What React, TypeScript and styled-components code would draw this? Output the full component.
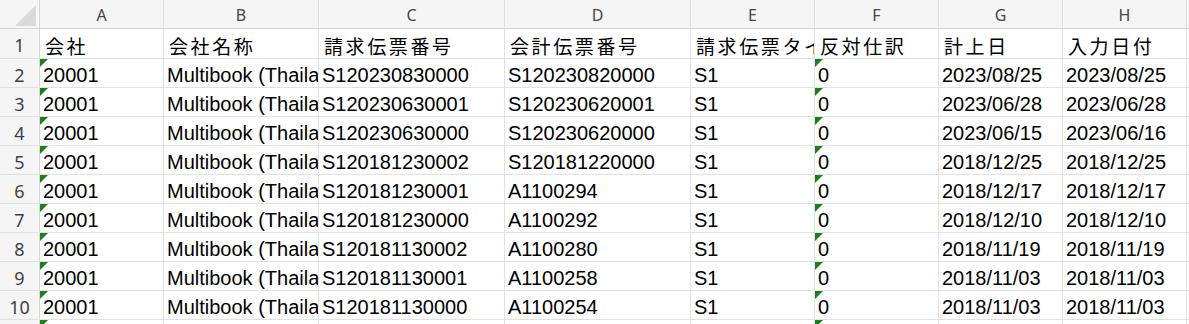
import React from 'react'
import styled, { createGlobalStyle } from 'styled-components'

const GlobalStyle = createGlobalStyle`
  html, body {
    margin: 0;
    padding: 0;
    background: #ffffff;
    overflow: hidden;
  }
`

const Sheet = styled.div`
  display: grid;
  grid-template-columns: 40px 124px 155px 186px 186px 124px 124px 124px 124px 1fr;
  grid-template-rows: 29px 30px repeat(10, 29px);
  width: 1189px;
  height: 324px;
  overflow: hidden;
  background: #ffffff;
`

const Corner = styled.div`
  position: relative;
  background: #f5f5f5;
  border-right: 1px solid #d6d6d6;
  border-bottom: 1px solid #d6d6d6;
  box-sizing: border-box;

  &::after {
    content: '';
    position: absolute;
    left: 15px;
    top: 5px;
    width: 21px;
    height: 21px;
    background: #dadada;
    clip-path: polygon(100% 0, 100% 100%, 0 100%);
  }
`

const ColHead = styled.div`
  display: flex;
  align-items: center;
  justify-content: center;
  background: #f5f5f5;
  border-right: 1px solid #e0e0e0;
  border-bottom: 1px solid #d6d6d6;
  box-sizing: border-box;
  font-family: 'Noto Sans', 'Open Sans', sans-serif;
  font-size: 16px;
  color: #454545;
  padding-top: 1px;
`

const RowHead = styled.div`
  display: flex;
  align-items: center;
  justify-content: center;
  background: #f5f5f5;
  border-right: 1px solid #d6d6d6;
  border-bottom: 1px solid #e0e0e0;
  box-sizing: border-box;
  font-family: 'Noto Sans', 'Open Sans', sans-serif;
  font-size: 18px;
  color: #3f3f46;
  padding-top: 3px;
`

const Cell = styled.div<{ $flag?: boolean; $cjk?: boolean }>`
  position: relative;
  display: flex;
  align-items: flex-end;
  box-sizing: border-box;
  border-right: 1px solid #e1e1e1;
  border-bottom: 1px solid #e1e1e1;
  padding: 0 0 2px ${p => (p.$cjk ? '5px' : '3px')};
  overflow: hidden;
  white-space: nowrap;
  font-family: ${p =>
    p.$cjk
      ? "'Noto Sans CJK JP', 'Noto Sans', sans-serif"
      : "'Liberation Sans', Arial, sans-serif"};
  font-size: ${p => (p.$cjk ? '19px' : '20px')};
  letter-spacing: ${p => (p.$cjk ? '2.6px' : '0')};
  line-height: 20px;
  color: #000000;

  &::before {
    content: '';
    display: ${p => (p.$flag ? 'block' : 'none')};
    position: absolute;
    left: 0;
    top: 0;
    width: 8px;
    height: 8px;
    background: #1b7f1b;
    clip-path: polygon(0 0, 100% 0, 0 100%);
  }
`

const letters = ['A', 'B', 'C', 'D', 'E', 'F', 'G', 'H', '']

const titles = ['会社', '会社名称', '請求伝票番号', '会計伝票番号', '請求伝票タイプ', '反対仕訳', '計上日', '入力日付', '']

const rows = [
  ['S120230830000', 'S120230820000', '2023/08/25', '2023/08/25'],
  ['S120230630001', 'S120230620001', '2023/06/28', '2023/06/28'],
  ['S120230630000', 'S120230620000', '2023/06/15', '2023/06/16'],
  ['S120181230002', 'S120181220000', '2018/12/25', '2018/12/25'],
  ['S120181230001', 'A1100294', '2018/12/17', '2018/12/17'],
  ['S120181230000', 'A1100292', '2018/12/10', '2018/12/10'],
  ['S120181130002', 'A1100280', '2018/11/19', '2018/11/19'],
  ['S120181130001', 'A1100258', '2018/11/03', '2018/11/03'],
  ['S120181130000', 'A1100254', '2018/11/03', '2018/11/03'],
  ['S120181030000', 'A1100250', '2018/10/25', '2018/10/25'],
]

const App = () => {
  return (
    <>
      <GlobalStyle />
      <Sheet>
        <Corner />
        {letters.map((l, i) => (
          <ColHead key={'h' + i}>{l}</ColHead>
        ))}

        <RowHead>1</RowHead>
        {titles.map((t, i) => (
          <Cell key={'t' + i} $cjk>{t}</Cell>
        ))}

        {rows.map((r, i) => (
          <React.Fragment key={'r' + i}>
            <RowHead>{i + 2}</RowHead>
            <Cell $flag>20001</Cell>
            <Cell>Multibook (Thailand) Co., Ltd.</Cell>
            <Cell>{r[0]}</Cell>
            <Cell>{r[1]}</Cell>
            <Cell>S1</Cell>
            <Cell $flag>0</Cell>
            <Cell>{r[2]}</Cell>
            <Cell>{r[3]}</Cell>
            <Cell />
          </React.Fragment>
        ))}
      </Sheet>
    </>
  )
}

export default App
